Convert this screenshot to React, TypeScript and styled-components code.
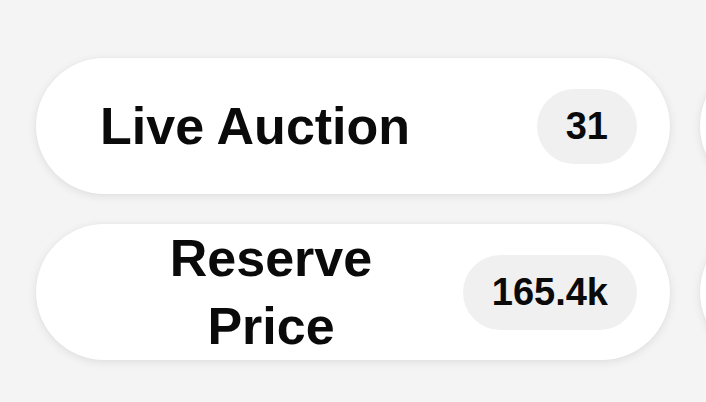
import styled, { createGlobalStyle } from 'styled-components';

const GlobalStyle = createGlobalStyle`
  html, body {
    margin: 0;
    padding: 0;
    background: #f4f4f4;
  }
  body {
    font-family: "Liberation Sans", Arial, sans-serif;
    color: #0a0a0a;
    overflow: hidden;
  }
`;

const Page = styled.div`
  width: 706px;
  height: 402px;
  overflow: hidden;
  padding: 58px 0 0 36px;
  box-sizing: border-box;
`;

const StatGrid = styled.div`
  display: grid;
  grid-template-columns: repeat(2, 634px);
  column-gap: 30px;
  row-gap: 30px;
`;

const StatCard = styled.div`
  display: flex;
  align-items: center;
  justify-content: space-between;
  gap: 20px;
  min-height: 136px;
  padding: 0 33px 0 64px;
  box-sizing: border-box;
  background: #ffffff;
  border-radius: 68px;
  box-shadow: 0 2px 10px rgba(0, 0, 0, 0.09), 0 0 2px rgba(0, 0, 0, 0.04);
`;

const StatLabel = styled.div`
  max-width: 342px;
  font-size: 52px;
  font-weight: 700;
  line-height: 68px;
  text-align: center;
`;

const StatBadge = styled.div`
  flex-shrink: 0;
  display: flex;
  align-items: center;
  justify-content: center;
  height: 75px;
  padding: 0 29px;
  border-radius: 38px;
  background: #f0f0f0;
  font-size: 38px;
  font-weight: 700;
  white-space: nowrap;
`;

// left column is the visible one, right column only peeks in at the edge
const stats = [
  { label: 'Live Auction', value: '31' },
  null,
  { label: 'Reserve Price', value: '165.4k' },
  null,
];

export default function App() {
  return (
    <>
      <GlobalStyle />
      <Page>
        <StatGrid>
          {stats.map((s, i) =>
            s ? (
              <StatCard key={i}>
                <StatLabel>{s.label}</StatLabel>
                <StatBadge>{s.value}</StatBadge>
              </StatCard>
            ) : (
              <StatCard key={i} aria-hidden />
            )
          )}
        </StatGrid>
      </Page>
    </>
  );
}
